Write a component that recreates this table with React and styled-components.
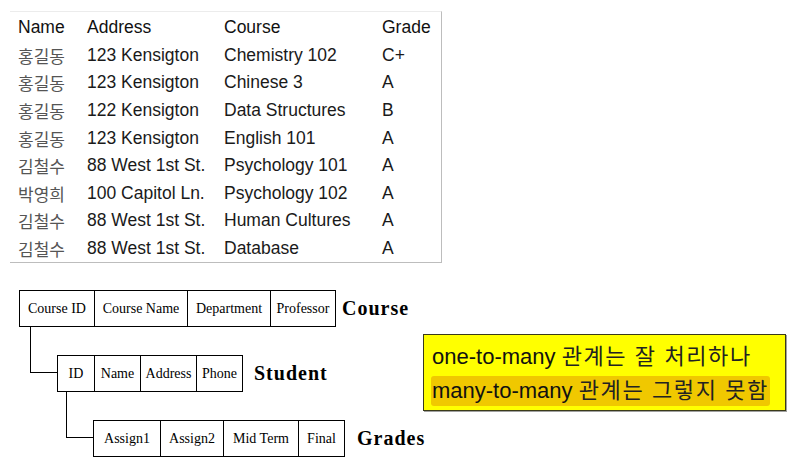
import React from 'react';
import styled, { createGlobalStyle, css } from 'styled-components';

const Global = createGlobalStyle`
  html, body { margin: 0; padding: 0; background: #fff; }
  body { font-family: "Liberation Sans", "Noto Sans CJK KR", sans-serif; }
`;

const Page = styled.div`
  width: 799px;
  height: 467px;
  overflow: hidden;
`;

const RecordPanel = styled.div`
  margin: 11px 0 0 10px;
  width: 432px;
  box-sizing: border-box;
  border-top: 1px solid #ececec;
  border-right: 1px solid #bdbdbd;
  border-bottom: 1px solid #bdbdbd;
  padding: 2px 0 0 8px;
  display: grid;
  grid-template-columns: 69px 137px 158px 1fr;
  grid-auto-rows: 27.6px;
  align-items: center;
  font-size: 17.5px;
  white-space: nowrap;
`;

const HeadCell = styled.div`
  color: #111;
`;

const DataCell = styled.div`
  color: ${p => (p.$korean ? '#555' : '#1a1a1a')};
  font-family: ${p => (p.$korean ? '"Noto Sans CJK KR", sans-serif' : 'inherit')};
  font-size: ${p => (p.$korean ? '17px' : 'inherit')};
`;

const Bottom = styled.div`
  display: flex;
  align-items: flex-start;
  margin-top: 27px;
  padding-left: 19px;
`;

const Diagram = styled.div`
  width: 404px;
  flex: none;
  display: flex;
  flex-direction: column;
`;

const Relation = styled.div`
  display: flex;
  align-items: center;
  position: relative;
  margin-left: ${p => p.$indent}px;
  margin-top: ${p => p.$gap}px;
  ${p =>
    p.$linked &&
    css`
      &::before {
        content: '';
        position: absolute;
        left: -27px;
        top: -28px;
        width: 27px;
        height: 46px;
        box-sizing: border-box;
        border-left: 1px solid #000;
        border-bottom: 1px solid #000;
      }
    `}
`;

const Schema = styled.div`
  display: flex;
  height: 37px;
  box-sizing: border-box;
  border: 1px solid #000;
  border-right: none;
  background: #fff;
`;

const Field = styled.div`
  width: ${p => p.$w}px;
  box-sizing: border-box;
  border-right: 1px solid #000;
  display: flex;
  align-items: center;
  justify-content: center;
  font-family: "Liberation Serif", serif;
  font-size: 14px;
  color: #000;
  white-space: nowrap;
`;

const RelationName = styled.div`
  margin-left: ${p => p.$gap}px;
  font-family: "Liberation Serif", serif;
  font-weight: bold;
  font-size: 20px;
  letter-spacing: 1px;
  color: #000;
`;

const Note = styled.div`
  margin-top: 44px;
  width: 363px;
  box-sizing: border-box;
  background: #ffff00;
  border: 1px solid #3a3a1a;
  box-shadow: 1px 1px 0 #a0a0a0;
  padding: 6px 6px 5px 8px;
  font-size: 22px;
  line-height: 32px;
  color: #111;
  white-space: nowrap;
`;

const NoteLine = styled.div`
  height: 32px;
`;

const Hangul = styled.span`
  letter-spacing: 1.6px;
  color: #222;
`;

const Highlight = styled.span`
  display: inline-block;
  margin: 3px 0 0 -1px;
  height: 30px;
  line-height: 30px;
  padding: 0 1px 0 1px;
  background: #f0c800;
  border-radius: 3px;
`;

const rows = [
  ['홍길동', '123 Kensigton', 'Chemistry 102', 'C+'],
  ['홍길동', '123 Kensigton', 'Chinese 3', 'A'],
  ['홍길동', '122 Kensigton', 'Data Structures', 'B'],
  ['홍길동', '123 Kensigton', 'English 101', 'A'],
  ['김철수', '88 West 1st St.', 'Psychology 101', 'A'],
  ['박영희', '100 Capitol Ln.', 'Psychology 102', 'A'],
  ['김철수', '88 West 1st St.', 'Human Cultures', 'A'],
  ['김철수', '88 West 1st St.', 'Database', 'A'],
];

const relations = [
  {
    name: 'Course',
    indent: 0,
    gap: 0,
    labelGap: 6,
    fields: [['Course ID', 75], ['Course Name', 93], ['Department', 83], ['Professor', 65]],
  },
  {
    name: 'Student',
    indent: 38,
    gap: 28,
    labelGap: 11,
    linked: true,
    fields: [['ID', 37], ['Name', 46], ['Address', 56], ['Phone', 46]],
  },
  {
    name: 'Grades',
    indent: 74,
    gap: 28,
    labelGap: 12,
    linked: true,
    fields: [['Assign1', 67], ['Assign2', 63], ['Mid Term', 75], ['Final', 46]],
  },
];

export default function App() {
  return (
    <Page>
      <Global />
      <RecordPanel>
        {['Name', 'Address', 'Course', 'Grade'].map(h => (
          <HeadCell key={h}>{h}</HeadCell>
        ))}
        {rows.map((r, i) =>
          r.map((c, j) => (
            <DataCell key={`${i}-${j}`} $korean={j === 0}>
              {c}
            </DataCell>
          ))
        )}
      </RecordPanel>
      <Bottom>
        <Diagram>
          {relations.map(rel => (
            <Relation key={rel.name} $indent={rel.indent} $gap={rel.gap} $linked={rel.linked}>
              <Schema>
                {rel.fields.map(([f, w]) => (
                  <Field key={f} $w={w}>
                    {f}
                  </Field>
                ))}
              </Schema>
              <RelationName $gap={rel.labelGap}>{rel.name}</RelationName>
            </Relation>
          ))}
        </Diagram>
        <Note>
          <NoteLine>
            one-to-many <Hangul>관계는 잘 처리하나</Hangul>
          </NoteLine>
          <NoteLine>
            <Highlight>
              many-to-many <Hangul>관계는 그렇지 못함</Hangul>
            </Highlight>
          </NoteLine>
        </Note>
      </Bottom>
    </Page>
  );
}
